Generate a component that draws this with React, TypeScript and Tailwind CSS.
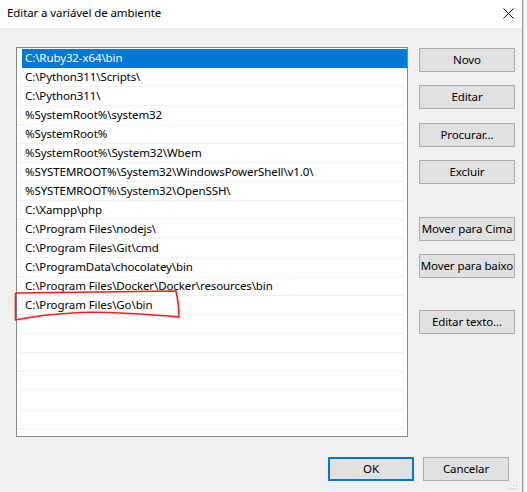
import React from "react";

const items = [
  "C:\\Ruby32-x64\\bin",
  "C:\\Python311\\Scripts\\",
  "C:\\Python311\\",
  "%SystemRoot%\\system32",
  "%SystemRoot%",
  "%SystemRoot%\\System32\\Wbem",
  "%SYSTEMROOT%\\System32\\WindowsPowerShell\\v1.0\\",
  "%SYSTEMROOT%\\System32\\OpenSSH\\",
  "C:\\Xampp\\php",
  "C:\\Program Files\\nodejs\\",
  "C:\\Program Files\\Git\\cmd",
  "C:\\ProgramData\\chocolatey\\bin",
  "C:\\Program Files\\Docker\\Docker\\resources\\bin",
  "C:\\Program Files\\Go\\bin",
];

const rows = [...items, "", "", "", "", "", "", ""];

function Btn({ label, className = "" }: { label: string; className?: string }) {
  return (
    <div
      className={
        "h-[24px] w-[96px] flex items-center justify-center border border-[#adadad] bg-[#e1e1e1] text-[11.5px] tracking-[-0.1px] text-black leading-none whitespace-nowrap " +
        className
      }
    >
      {label}
    </div>
  );
}

export default function App() {
  return (
    <div
      className="relative w-[527px] h-[492px] flex overflow-hidden bg-[#f4f4f4]"
      style={{ fontFamily: '"Noto Sans", "Segoe UI", sans-serif' }}
    >
      <div className="w-[522px] h-full flex flex-col">
        {/* title bar */}
        <div className="h-[28px] bg-white flex items-center justify-between pl-[7px] pr-[8px] pb-[2px]">
          <span className="text-[11.5px] tracking-[-0.1px] text-black leading-none">Editar a variável de ambiente</span>
          <svg width="11" height="11" viewBox="0 0 11 11" className="mt-[1px]">
            <path d="M0.5 0.5 L10.5 10.5 M10.5 0.5 L0.5 10.5" stroke="#000" strokeWidth="1" fill="none" />
          </svg>
        </div>
        {/* body */}
        <div className="relative flex-1 bg-[#f0f0f0] flex flex-col pt-[19px] pl-[16px]">
          <div className="flex">
            {/* list */}
            <div className="w-[392px] h-[390px] border border-[#828790] bg-white pt-[1px] overflow-hidden flex flex-col">
              {rows.map((r, i) =>
                i === 0 ? (
                  <div
                    key={i}
                    className="shrink-0 h-[19px] ml-[5px] bg-[#0078d7] text-white text-[11.5px] tracking-[-0.1px] leading-[18px] pl-[3px] whitespace-nowrap"
                  >
                    {r}
                  </div>
                ) : (
                  <div key={i} className="shrink-0 h-[19px] flex flex-col">
                    <div className="h-[18px] pl-[8px] text-[11.5px] tracking-[-0.1px] leading-[18px] text-black whitespace-nowrap">
                      {r}
                    </div>
                    <div className="h-px ml-[1px] mr-[3px] bg-[#f0f0f0]" />
                  </div>
                )
              )}
            </div>
            {/* buttons */}
            <div className="ml-[11px] mt-[1px] flex flex-col">
              <Btn label="Novo" />
              <Btn label="Editar" className="mt-[13px]" />
              <Btn label="Procurar..." className="mt-[14px]" />
              <Btn label="Excluir" className="mt-[13px]" />
              <Btn label="Mover para Cima" className="mt-[33px]" />
              <Btn label="Mover para baixo" className="mt-[13px]" />
              <Btn label="Editar texto..." className="mt-[32px]" />
            </div>
          </div>
          {/* bottom buttons */}
          <div className="flex justify-end pr-[13px] mt-[20px] gap-[9px]">
            <div className="h-[24px] w-[86px] flex items-center justify-center border-2 border-[#0078d7] bg-[#e1e1e1] text-[11.5px] tracking-[-0.1px] text-black leading-none">
              OK
            </div>
            <div className="h-[24px] w-[86px] flex items-center justify-center border border-[#adadad] bg-[#e1e1e1] text-[11.5px] tracking-[-0.1px] text-black leading-none">
              Cancelar
            </div>
          </div>
          {/* resize grip */}
          <svg className="absolute right-[4px] bottom-[2px]" width="8" height="8" viewBox="0 0 8 8">
            <rect x="6" y="0" width="1" height="1" fill="#bcbcbc" />
            <rect x="3" y="3" width="1" height="1" fill="#bcbcbc" />
            <rect x="6" y="3" width="1" height="1" fill="#bcbcbc" />
            <rect x="0" y="6" width="1" height="1" fill="#bcbcbc" />
            <rect x="3" y="6" width="1" height="1" fill="#bcbcbc" />
            <rect x="6" y="6" width="1" height="1" fill="#bcbcbc" />
          </svg>
        </div>
      </div>
      {/* window edge */}
      <div className="w-px h-full bg-[#9b9b9b]" />
      <div className="w-px h-full bg-[#d9d9d9]" />
      <div className="flex-1 h-full bg-[#f7f7f7]" />

      {/* red annotation */}
      <svg className="absolute left-0 top-0 pointer-events-none" width="527" height="492" viewBox="0 0 527 492">
        <path
          d="M15.5 293 C60 292.5 130 291.5 176 291 C177.5 298 179 308 179 317 C150 314.5 110 311 80 312.5 C50 314 30 317 15.5 320 L15.5 293"
          stroke="#ff1a1a"
          strokeWidth="1.6"
          fill="none"
          strokeLinejoin="round"
        />
      </svg>
    </div>
  );
}
